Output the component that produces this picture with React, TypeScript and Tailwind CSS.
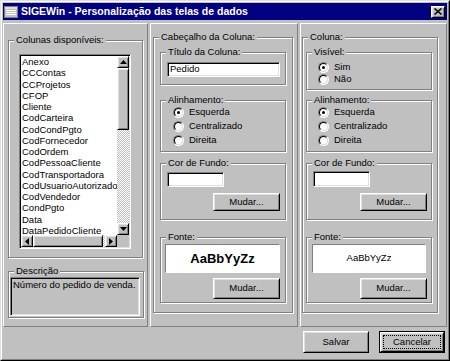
import type { ReactNode } from "react";

const raised =
  "bg-[#c0c0c0] border border-t-white border-l-white border-r-black border-b-black shadow-[inset_1px_1px_0_#dfdfdf,inset_-1px_-1px_0_#808080]";
const sunken =
  "border border-t-[#808080] border-l-[#808080] border-r-white border-b-white shadow-[inset_1px_1px_0_#000,inset_-1px_-1px_0_#dfdfdf]";
const dither =
  "bg-[image:repeating-conic-gradient(#fff_0%_25%,#c0c0c0_0%_50%)] bg-[length:2px_2px]";

const COLUMNS = [
  "Anexo",
  "CCContas",
  "CCProjetos",
  "CFOP",
  "Cliente",
  "CodCarteira",
  "CodCondPgto",
  "CodFornecedor",
  "CodOrdem",
  "CodPessoaCliente",
  "CodTransportadora",
  "CodUsuarioAutorizador",
  "CodVendedor",
  "CondPgto",
  "Data",
  "DataPedidoCliente",
];

function Group({
  label,
  className = "",
  children,
}: {
  label: string;
  className?: string;
  children?: ReactNode;
}) {
  return (
    <div
      className={`relative border border-[#808080] shadow-[1px_1px_0_#fff,inset_1px_1px_0_#fff] ${className}`}
    >
      <span className="absolute top-[-7px] left-[5px] px-[2px] bg-[#c0c0c0] leading-[11px] whitespace-nowrap">
        {label}
      </span>
      {children}
    </div>
  );
}

function Radio({ checked, label }: { checked?: boolean; label: string }) {
  return (
    <div className="flex items-center h-full">
      <div className="w-[11px] h-[11px] rounded-full border border-t-[#808080] border-l-[#808080] border-r-white border-b-white">
        <div className="w-full h-full rounded-full bg-white border border-t-black border-l-black border-r-[#dfdfdf] border-b-[#dfdfdf] flex items-center justify-center">
          {checked && <div className="w-[3px] h-[3px] rounded-full bg-black" />}
        </div>
      </div>
      <span className="ml-[5px]">{label}</span>
    </div>
  );
}

function Button({ label, className = "" }: { label: string; className?: string }) {
  return (
    <div className={`${raised} flex items-center justify-center ${className}`}>
      {label}
    </div>
  );
}

function Arrow({ dir }: { dir: "up" | "down" | "left" | "right" }) {
  const pts = {
    up: "3.5,0 7,4 0,4",
    down: "0,0 7,0 3.5,4",
    left: "4,0 4,7 0,3.5",
    right: "0,0 4,3.5 0,7",
  }[dir];
  const vertical = dir === "up" || dir === "down";
  return (
    <div className={`${raised} w-[12px] h-[12px] flex items-center justify-center`}>
      <svg width={vertical ? 7 : 4} height={vertical ? 4 : 7}>
        <polygon points={pts} fill="#000" />
      </svg>
    </div>
  );
}

function ListBox() {
  return (
    <div className={`${sunken} ml-[10px] mt-[13px] w-[112px] h-[195px] p-[1px]`}>
      <div className="grid grid-cols-[1fr_12px] grid-rows-[1fr_12px] w-full h-full">
        <div className="bg-white overflow-hidden">
          {COLUMNS.map((c) => (
            <div key={c} className="h-[11.25px] leading-[11.25px] whitespace-nowrap pl-[1px]">
              {c}
            </div>
          ))}
        </div>
        <div className="flex flex-col">
          <Arrow dir="up" />
          <div className={`${raised} h-[62px]`} />
          <div className={`flex-1 ${dither}`} />
          <Arrow dir="down" />
        </div>
        <div className="flex">
          <Arrow dir="left" />
          <div className={`${raised} flex-1`} />
          <div className={`w-[2px] ${dither}`} />
          <Arrow dir="right" />
        </div>
        <div className="bg-[#c0c0c0]" />
      </div>
    </div>
  );
}

function Alinhamento({ className = "" }: { className?: string }) {
  return (
    <Group label="Alinhamento:" className={`w-[126px] h-[52px] pt-[4px] ${className}`}>
      <div className="h-[14px]">
        <Radio checked label="Esquerda" />
      </div>
      <div className="h-[14px]">
        <Radio label="Centralizado" />
      </div>
      <div className="h-[14px]">
        <Radio label="Direita" />
      </div>
    </Group>
  );
}

export default function App() {
  return (
    <div className="w-[450px] h-[361px] bg-[#c0c0c0] border border-t-[#dfdfdf] border-l-[#dfdfdf] border-r-black border-b-black font-['Liberation_Sans',Arial,sans-serif] text-[9.5px] text-black select-none">
      <div className="h-full border border-t-white border-l-white border-r-[#808080] border-b-[#808080] p-[1px] flex flex-col">
        {/* title bar */}
        <div className="h-[17px] bg-[#000080] flex items-center pl-[1px] pr-[2px]">
          <svg width="14" height="12" viewBox="0 0 14 12">
            <rect x="0.5" y="0.5" width="13" height="11" fill="#c0c0c0" stroke="#808080" />
            <rect x="1" y="1" width="12" height="2" fill="#dfdfdf" />
            <rect x="2" y="4" width="10" height="1" fill="#fff" />
            <rect x="2" y="6" width="10" height="1" fill="#fff" />
            <rect x="2" y="8" width="10" height="1" fill="#fff" />
          </svg>
          <span className="ml-[3px] text-white font-bold text-[10.5px] leading-none whitespace-nowrap">
            SIGEWin - Personalização das telas de dados
          </span>
          <div className={`${raised} ml-auto w-[14px] h-[12px] flex items-center justify-center`}>
            <svg width="8" height="7" viewBox="0 0 8 7">
              <path d="M0.5 0.5 L7.5 6.5 M7.5 0.5 L0.5 6.5" stroke="#000" strokeWidth="1.5" />
            </svg>
          </div>
        </div>

        {/* panels */}
        <div className="flex gap-[2px] mt-[3px] h-[304px]">
          <div className="w-[145px] border border-t-white border-l-white border-r-[#808080] border-b-[#808080]">
            <Group label="Colunas disponíveis:" className="ml-[4px] mt-[16px] w-[135px] h-[218px]">
              <ListBox />
            </Group>
            <Group label="Descrição" className="ml-[4px] mt-[13px] w-[136px] h-[47px]">
              <div className={`${sunken} ml-[1px] mt-[5px] w-[130px] h-[39px] p-[1px]`}>
                <div className="leading-[11px] pl-[1px]">Número do pedido de venda.</div>
              </div>
            </Group>
          </div>

          <div className="w-[148px] border border-t-white border-l-white border-r-[#808080] border-b-[#808080]">
            <Group label="Cabeçalho da Coluna:" className="ml-[2px] mt-[13px] w-[140px] h-[276px] pl-[6px]">
              <Group label="Título da Coluna:" className="mt-[14px] w-[126px] h-[33px]">
                <div className={`${sunken} bg-white ml-[6px] mt-[9px] w-[113px] h-[15px] p-[1px] flex items-center pl-[2px]`}>
                  Pedido
                </div>
              </Group>
              <Alinhamento className="mt-[15px] pl-[12px]" />
              <Group label="Cor de Fundo:" className="mt-[11px] w-[126px] h-[57px]">
                <div className={`${sunken} bg-white ml-[6px] mt-[8px] w-[57px] h-[15px]`} />
                <Button label="Mudar..." className="ml-[52px] mt-[6px] w-[67px] h-[18px]" />
              </Group>
              <Group label="Fonte:" className="mt-[17px] w-[126px] h-[66px]">
                <div className="bg-white border border-t-[#808080] border-l-[#808080] border-r-white border-b-white ml-[4px] mt-[6px] w-[115px] h-[29px] flex items-center justify-center font-bold text-[13px]">
                  AaBbYyZz
                </div>
                <Button label="Mudar..." className="ml-[52px] mt-[5px] w-[67px] h-[21px]" />
              </Group>
            </Group>
          </div>

          <div className="w-[147px] border border-t-white border-l-white border-r-[#808080] border-b-[#808080]">
            <Group label="Coluna:" className="ml-[1px] mt-[13px] w-[136px] h-[276px] pl-[3px]">
              <Group label="Visível:" className="mt-[14px] w-[126px] h-[38px] pt-[8px] pl-[11px]">
                <div className="h-[12px]">
                  <Radio checked label="Sim" />
                </div>
                <div className="h-[12px]">
                  <Radio label="Não" />
                </div>
              </Group>
              <Alinhamento className="mt-[10px] pl-[11px]" />
              <Group label="Cor de Fundo:" className="mt-[11px] w-[126px] h-[57px]">
                <div className={`${sunken} bg-white ml-[6px] mt-[7px] w-[57px] h-[16px]`} />
                <Button label="Mudar..." className="ml-[53px] mt-[6px] w-[67px] h-[18px]" />
              </Group>
              <Group label="Fonte:" className="mt-[17px] w-[126px] h-[66px]">
                <div className="bg-white border border-t-[#808080] border-l-[#808080] border-r-white border-b-white ml-[5px] mt-[6px] w-[114px] h-[29px] flex items-center justify-center text-[9.5px]">
                  AaBbYyZz
                </div>
                <Button label="Mudar..." className="ml-[53px] mt-[5px] w-[67px] h-[21px]" />
              </Group>
            </Group>
          </div>
        </div>

        {/* bottom buttons */}
        <div className="flex justify-end gap-[10px] mt-[4px] pr-[2px]">
          <Button label="Salvar" className="w-[66px] h-[22px]" />
          <div className="w-[66px] h-[22px] border border-black">
            <div className={`${raised} w-full h-full p-[2px]`}>
              <div className="w-full h-full border border-dotted border-black flex items-center justify-center">
                Cancelar
              </div>
            </div>
          </div>
        </div>
      </div>
    </div>
  );
}
